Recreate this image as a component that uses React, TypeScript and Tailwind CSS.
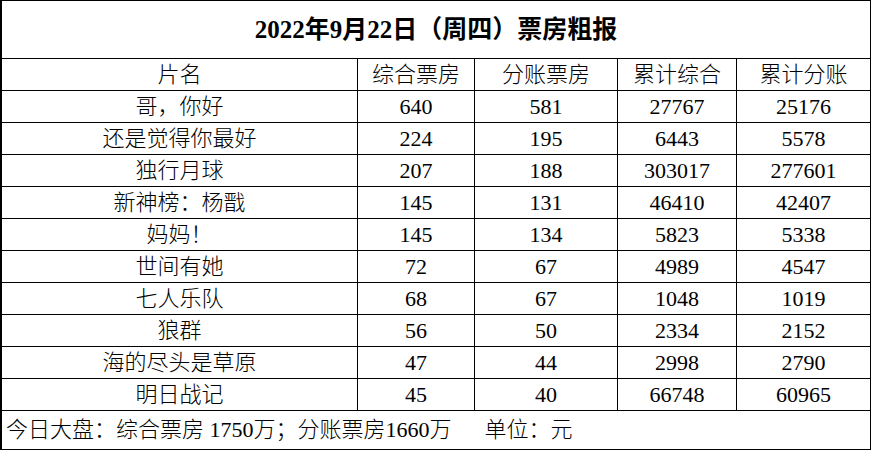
import React from "react";

const rows: [string, string, string, string, string][] = [
  ["哥，你好", "640", "581", "27767", "25176"],
  ["还是觉得你最好", "224", "195", "6443", "5578"],
  ["独行月球", "207", "188", "303017", "277601"],
  ["新神榜：杨戬", "145", "131", "46410", "42407"],
  ["妈妈！", "145", "134", "5823", "5338"],
  ["世间有她", "72", "67", "4989", "4547"],
  ["七人乐队", "68", "67", "1048", "1019"],
  ["狼群", "56", "50", "2334", "2152"],
  ["海的尽头是草原", "47", "44", "2998", "2790"],
  ["明日战记", "45", "40", "66748", "60965"],
];

const headers = ["片名", "综合票房", "分账票房", "累计综合", "累计分账"];

const font = { fontFamily: '"Liberation Serif", "Noto Sans CJK SC", serif' };

export default function App() {
  return (
    <div className="w-[872px] h-[451px] bg-white text-black" style={font}>
      <div className="w-[871px] border-t border-l-2 border-black">
        <div className="h-[58px] border-r border-b border-black flex items-center justify-center text-[25px] font-bold leading-none">
          2022年9月22日（周四）票房粗报
        </div>
        <div className="grid grid-cols-[356px_117px_143px_119px_134px] font-light">
          {headers.map((h) => (
            <div
              key={h}
              className="h-[32px] border-r border-b border-black flex items-center justify-center text-[22px] leading-none"
            >
              {h}
            </div>
          ))}
          {rows.map((r) =>
            r.map((c, i) => (
              <div
                key={r[0] + i}
                className="h-[32px] border-r border-b border-black flex items-center justify-center text-[22px] leading-none"
              >
                {c}
              </div>
            ))
          )}
        </div>
        <div className="h-[39px] border-r border-b border-black flex items-center pl-[4px] text-[22px] font-light leading-none whitespace-pre">
          今日大盘：综合票房 1750万；分账票房1660万      单位：元
        </div>
      </div>
    </div>
  );
}
